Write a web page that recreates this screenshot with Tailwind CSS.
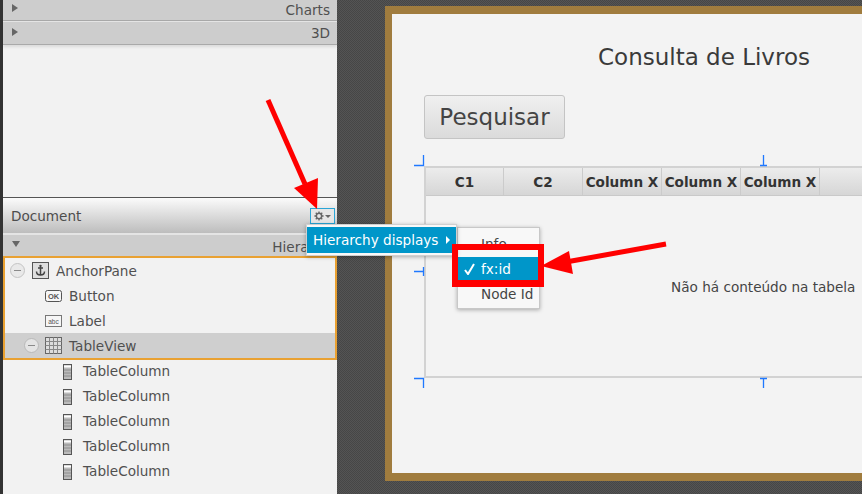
<!DOCTYPE html>
<html>
<head>
<meta charset="utf-8">
<script src="https://cdn.jsdelivr.net/npm/@tailwindcss/browser@4"></script>
</head>
<body class="overflow-hidden">
<div class="relative flex w-[862px] h-[494px] overflow-hidden font-['DejaVu_Sans',sans-serif] text-[13.6px] text-[#505050] bg-[#4d4d4d]">
  <!-- left panel -->
  <aside class="w-[337px] h-full shrink-0 flex flex-col border-l-[3px] border-[#333333] bg-[#f2f2f2]">
    <div class="h-[21px] flex items-center justify-between pl-[9px] pr-[7px] bg-[#cdcdcd] border-b border-[#a9a9a9]">
      <span class="w-0 h-0 mb-[5px] border-y-[4px] border-y-transparent border-l-[6px] border-l-[#666666]"></span>
      <span>Charts</span>
    </div>
    <div class="h-[24px] flex items-center justify-between pl-[9px] pr-[7px] bg-[#cdcdcd] border-t border-t-[#e4e4e4] border-b border-b-[#a9a9a9] shadow-[0_2px_3px_rgba(0,0,0,0.1)]">
      <span class="w-0 h-0 mb-[3px] border-y-[4px] border-y-transparent border-l-[6px] border-l-[#666666]"></span>
      <span class="mt-[1px]">3D</span>
    </div>
    <div class="h-[152px]"></div>
    <div class="h-[36px] flex items-center justify-between pl-[8px] pr-[2px] border-t border-[#555555] bg-gradient-to-b from-[#fbfbfb] to-[#bdbdbd]">
      <span class="text-[#4d4d4d] mt-[2px]">Document</span>
      <div class="w-[25px] h-[16px] mt-[1px] flex items-center justify-center gap-[1px] border border-[#2aa5d6] bg-[#e6e6e6]">
        <svg width="10" height="10" viewBox="0 0 12 12"><circle cx="6" cy="6" r="3.2" fill="none" stroke="#666" stroke-width="1.8"/><path d="M6 0.5V3M6 9v2.5M0.5 6H3M9 6h2.5M2.1 2.1l1.8 1.8M8.1 8.1l1.8 1.8M2.1 9.9l1.8-1.8M8.1 3.9l1.8-1.8" stroke="#666" stroke-width="1.6"/></svg>
        <span class="w-0 h-0 border-x-[3px] border-x-transparent border-t-[3px] border-t-[#666666]"></span>
      </div>
    </div>
    <div class="h-[23px] flex items-start justify-between pl-[9px] bg-[#cdcdcd] border-t-2 border-t-[#e4e4e4]">
      <span class="w-0 h-0 mt-[6px] border-x-[4px] border-x-transparent border-t-[6px] border-t-[#666666]"></span>
      <span class="mt-[2px] -mr-[1px]">Hierarchy</span>
    </div>
    <div class="border-2 border-[#e9a132] -mb-[1px]">
      <div class="h-[25px] flex items-center pl-[5px]">
        <span class="w-[15px] h-[15px] rounded-full border border-[#c4c4c4] bg-[#e9e9e9] flex items-center justify-center"><span class="w-[7px] h-[1.5px] bg-[#8a8a8a]"></span></span>
        <svg class="ml-[7px]" width="17" height="17" viewBox="0 0 17 17"><rect x="0.5" y="0.5" width="16" height="16" fill="#dedede" stroke="#555"/><path d="M8.5 3v10M6 6h5M4.5 9.5c0 2.5 2 3.5 4 3.5s4-1 4-3.5" fill="none" stroke="#444" stroke-width="1.5"/><circle cx="8.5" cy="3.8" r="1.1" fill="#444"/></svg>
        <span class="ml-[7px] mt-[1px]">AnchorPane</span>
      </div>
      <div class="h-[25px] flex items-center pl-[40px]">
        <svg width="17" height="12" viewBox="0 0 17 12"><rect x="0.5" y="0.5" width="16" height="11" rx="2" fill="#f6f6f6" stroke="#555"/><text x="8.5" y="8.5" text-anchor="middle" font-size="7.5" font-family="Liberation Sans" font-weight="bold" fill="#555">OK</text></svg>
        <span class="ml-[7px] mt-[1px]">Button</span>
      </div>
      <div class="h-[25px] flex items-center pl-[40px]">
        <svg width="17" height="12" viewBox="0 0 17 12"><rect x="0.5" y="0.5" width="16" height="11" fill="#f6f6f6" stroke="#777"/><text x="8.5" y="8.5" text-anchor="middle" font-size="6.5" font-family="Liberation Sans" fill="#555">abc</text></svg>
        <span class="ml-[7px] mt-[1px]">Label</span>
      </div>
      <div class="h-[25px] flex items-center pl-[19px] bg-[#cfcfcf]">
        <span class="w-[15px] h-[15px] rounded-full border border-[#b9b9b9] bg-[#e4e4e4] flex items-center justify-center"><span class="w-[7px] h-[1.5px] bg-[#8a8a8a]"></span></span>
        <svg class="ml-[6px]" width="17" height="17" viewBox="0 0 17 17"><rect x="0.5" y="0.5" width="16" height="16" fill="#ddd" stroke="#666"/><path d="M0.5 4.5h16M0.5 8.5h16M0.5 12.5h16M4.5 0.5v16M8.5 0.5v16M12.5 0.5v16" stroke="#888" stroke-width="1"/></svg>
        <span class="ml-[7px] mt-[1px]">TableView</span>
      </div>
    </div>
    <div class="h-[25px] flex items-center pl-[60px]">
      <svg width="9" height="16" viewBox="0 0 9 16"><rect x="0.5" y="0.5" width="8" height="15" fill="#bbb" stroke="#555"/><path d="M1 2.5h7" stroke="#fff" stroke-width="2"/><path d="M1 6h7M1 9h7M1 12h7" stroke="#8e8e8e"/></svg>
      <span class="ml-[11px]">TableColumn</span>
    </div>
    <div class="h-[25px] flex items-center pl-[60px]">
      <svg width="9" height="16" viewBox="0 0 9 16"><rect x="0.5" y="0.5" width="8" height="15" fill="#bbb" stroke="#555"/><path d="M1 2.5h7" stroke="#fff" stroke-width="2"/><path d="M1 6h7M1 9h7M1 12h7" stroke="#8e8e8e"/></svg>
      <span class="ml-[11px]">TableColumn</span>
    </div>
    <div class="h-[25px] flex items-center pl-[60px]">
      <svg width="9" height="16" viewBox="0 0 9 16"><rect x="0.5" y="0.5" width="8" height="15" fill="#bbb" stroke="#555"/><path d="M1 2.5h7" stroke="#fff" stroke-width="2"/><path d="M1 6h7M1 9h7M1 12h7" stroke="#8e8e8e"/></svg>
      <span class="ml-[11px]">TableColumn</span>
    </div>
    <div class="h-[25px] flex items-center pl-[60px]">
      <svg width="9" height="16" viewBox="0 0 9 16"><rect x="0.5" y="0.5" width="8" height="15" fill="#bbb" stroke="#555"/><path d="M1 2.5h7" stroke="#fff" stroke-width="2"/><path d="M1 6h7M1 9h7M1 12h7" stroke="#8e8e8e"/></svg>
      <span class="ml-[11px]">TableColumn</span>
    </div>
    <div class="h-[25px] flex items-center pl-[60px]">
      <svg width="9" height="16" viewBox="0 0 9 16"><rect x="0.5" y="0.5" width="8" height="15" fill="#bbb" stroke="#555"/><path d="M1 2.5h7" stroke="#fff" stroke-width="2"/><path d="M1 6h7M1 9h7M1 12h7" stroke="#8e8e8e"/></svg>
      <span class="ml-[11px]">TableColumn</span>
    </div>
  </aside>

  <!-- canvas -->
  <main class="flex-1 min-w-0 pl-[48px] pt-[6px] pb-[13px] bg-[repeating-conic-gradient(#464646_0_25%,#545454_0_50%)] bg-[length:2px_2px]">
    <div class="w-[600px] h-full border-y-[8px] border-l-[7px] border-y-[#a07c3e] border-l-[#a07c3e] bg-[#f3f3f3] pl-[32px] pr-[100px]">
      <div class="relative w-[468px]">
        <h1 class="pt-[28px] pl-[206px] -ml-[32px] h-[81px] whitespace-nowrap text-[23px] leading-[30px] text-[#3a3a3a]">Consulta de Livros</h1>
        <div class="w-[141px] h-[44px] flex items-center justify-center rounded-[3px] border border-[#c4c4c4] bg-gradient-to-b from-[#f0f0f0] to-[#dbdbdb] text-[23px] text-[#444444]">Pesquisar</div>
        <div class="mt-[27px] h-[212px] w-[560px] border-y-2 border-l-2 border-[#d2d2d2]">
          <div class="flex h-[28px] border-b border-[#c9c9c9] bg-gradient-to-b from-[#ececec] to-[#d6d6d6] font-bold text-[#333333] whitespace-nowrap">
            <div class="w-[78px] pt-[2px] flex items-center justify-center border-r border-[#cbcbcb]">C1</div>
            <div class="w-[79px] pt-[2px] flex items-center justify-center border-r border-[#cbcbcb]">C2</div>
            <div class="w-[79px] pt-[2px] flex items-center justify-center border-r border-[#cbcbcb]">Column X</div>
            <div class="w-[79px] pt-[2px] flex items-center justify-center border-r border-[#cbcbcb]">Column X</div>
            <div class="w-[79px] pt-[2px] flex items-center justify-center border-r border-[#cbcbcb]">Column X</div>
          </div>
          <div class="pt-[81px] pl-[245px] whitespace-nowrap text-[#444444]">Não há conteúdo na tabela</div>
        </div>
      </div>
    </div>
  </main>

  <!-- selection handles -->
  <svg class="absolute left-0 top-0 pointer-events-none" width="862" height="494" viewBox="0 0 862 494" fill="none">
    <g stroke="#1f78ff" stroke-width="1.3">
      <path d="M414 165.5h9.5V155"/>
      <path d="M763.5 155v10.5M760 165.5h7"/>
      <path d="M414 378.5h9.5V388"/>
      <path d="M763.5 378v10M760 378.5h7"/>
      <path d="M414 271.5h9.5M423.5 267v9"/>
    </g>
  </svg>

  <!-- menus -->
  <div class="absolute left-[457px] top-[227px] w-[83px] h-[82px] bg-[#f8f8f8] border border-[#c8c8c8] shadow-[0_1px_4px_rgba(0,0,0,0.3)] flex flex-col pt-[4px] text-[#444444]">
    <div class="h-[25px] pl-[23px] flex items-center">Info</div>
    <div class="h-[25px] pl-[6px] flex items-center gap-[6px] bg-[#0096c9] text-white">
      <svg class="-mt-[2px]" width="11" height="12" viewBox="0 0 11 12"><path d="M1 7L4 11L10 1" fill="none" stroke="#ffffff" stroke-width="2"/></svg>
      <span>fx:id</span>
    </div>
    <div class="h-[25px] pl-[23px] flex items-center">Node Id</div>
  </div>
  <div class="absolute left-[306px] top-[224px] w-[151px] h-[32px] bg-[#f8f8f8] border border-[#d0d0d0] shadow-[0_1px_4px_rgba(0,0,0,0.3)] py-[2px]">
    <div class="h-[26px] flex items-center justify-between pl-[6px] pr-[6px] bg-[#0096c9] text-white whitespace-nowrap"><span>Hierarchy displays</span><span class="w-0 h-0 border-y-[4px] border-y-transparent border-l-[4px] border-l-white"></span></div>
  </div>
  <div class="absolute left-[452px] top-[244px] w-[92px] h-[43px] border-[6px] border-b-[7px] border-[#ff0000]"></div>

  <!-- red arrows -->
  <svg class="absolute left-0 top-0 pointer-events-none" width="862" height="494" viewBox="0 0 862 494">
    <path d="M268 100L305 184" stroke="#ff0000" stroke-width="5" fill="none"/>
    <path d="M294 188L318 178L317 209Z" fill="#ff0000"/>
    <path d="M666 244L566 262" stroke="#ff0000" stroke-width="5" fill="none"/>
    <path d="M569 251L573 274L541 266Z" fill="#ff0000"/>
  </svg>
</div>
</body>
</html>
